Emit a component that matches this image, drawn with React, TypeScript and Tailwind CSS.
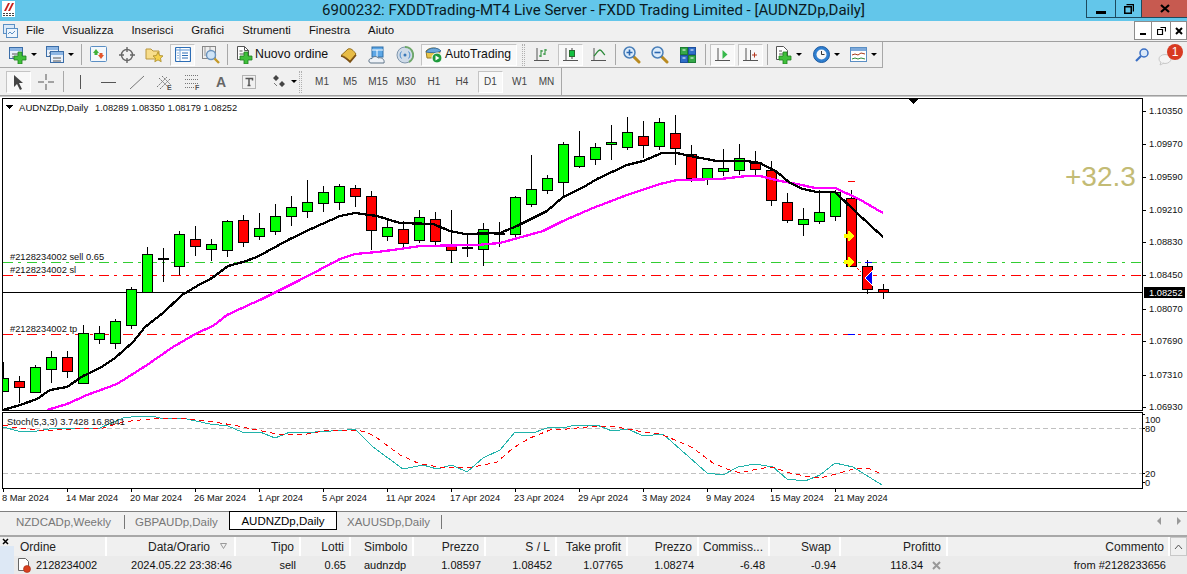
import React from "react";

const CANDLES: [number, number, number, number, string][] = [
  [378,391,362,392,"g"],[381,387,376,403,"r"],[367,392,365,393,"g"],[357,369,351,383,"g"],[357,371,351,378,"r"],
  [333,383,325,383,"g"],[333,339,326,344,"g"],[321,343,319,349,"g"],[289,325,287,329,"g"],[254,292,247,293,"g"],
  [258,258,248,282,"g"],[234,266,231,275,"g"],[239,246,226,256,"r"],[244,249,239,261,"g"],[221,250,220,257,"g"],
  [220,242,215,247,"r"],[228,236,213,240,"g"],[216,231,204,235,"g"],[207,216,196,226,"g"],[202,211,180,218,"g"],
  [192,203,186,212,"g"],[186,202,184,210,"g"],[188,196,185,207,"r"],[196,230,191,250,"r"],[227,236,218,241,"g"],
  [229,243,221,248,"r"],[217,240,210,243,"g"],[219,241,212,245,"r"],[245,250,210,263,"r"],[247,248,234,257,"r"],
  [229,249,223,266,"g"],[233,233,222,247,"g"],[197,234,196,238,"g"],[189,204,155,207,"g"],[178,190,175,194,"g"],
  [144,182,142,195,"g"],[156,166,131,168,"g"],[147,159,143,165,"g"],[142,144,125,160,"g"],[132,147,117,150,"g"],
  [136,145,121,158,"r"],[122,146,118,150,"g"],[133,148,115,165,"r"],[154,178,145,182,"r"],[168,179,168,185,"g"],
  [168,171,149,176,"g"],[158,170,144,175,"g"],[163,169,151,175,"r"],[170,200,161,206,"r"],[202,220,193,223,"r"],
  [219,224,208,236,"g"],[212,221,190,224,"g"],[192,216,190,221,"g"],[198,266,190,267,"r"],[266,289,260,294,"r"],[289,292,284,299,"r"],
];

const BLACK = "3,410 20,405 37,399 50,390 67,387 83,376 100,368 115,358 133,342 145,327 163,313 182,295 197,286 212,278 228,266 243,262 257,257 290,239 313,228 340,216 355,213 377,216 400,223 433,224 450,231 465,234 500,233 517,226 547,211 563,197 582,188 597,179 627,165 643,161 662,153 677,153 690,156 717,161 747,161 760,163 777,172 790,183 803,189 817,192 835,192 857,213 883,237";
const MAGENTA = "47,410 67,404 87,395 117,384 147,365 173,347 197,333 213,326 227,315 253,303 260,300 300,280 340,259 355,254 377,252 400,249 420,246 477,245 500,243 543,231 563,221 593,208 627,195 660,184 677,180 720,179 747,176 760,176 780,181 797,184 815,188 835,188 857,198 883,213";
const TEAL = "3,427 18,431 37,431 55,428 75,428 100,428 123,418 140,416 152,416 160,418 182,418 210,424 228,426 242,432 260,432 275,438 290,432 315,432 347,430 355,429 373,447 403,469 423,465 437,469 452,465 467,472 483,458 500,450 515,432 533,433 547,428 567,427 575,425 597,425 612,431 628,429 643,436 663,434 707,473 723,475 738,467 755,464 773,467 787,479 805,481 820,475 835,463 853,467 882,485";
const REDS = "3,425 17,428 37,430 57,430 73,429 103,428 123,422 140,420 160,418 182,418 207,421 233,425 257,430 277,434 307,434 323,431 355,430 367,432 380,440 400,455 420,464 440,467 467,468 483,465 497,462 513,448 530,438 550,430 567,429 597,426 617,427 643,432 660,434 680,442 693,448 713,463 727,469 740,473 757,469 772,467 790,473 810,477 820,478 840,473 857,468 868,468 882,474";

const PRICES: [string, number][] = [["1.10350",111],["1.09970",144],["1.09590",177],["1.09210",210],["1.08830",242],["1.08450",275],["1.08070",309],["1.07690",341],["1.07310",375],["1.06930",407]];
const DATES = ["8 Mar 2024","14 Mar 2024","20 Mar 2024","26 Mar 2024","1 Apr 2024","5 Apr 2024","11 Apr 2024","17 Apr 2024","23 Apr 2024","29 Apr 2024","3 May 2024","9 May 2024","15 May 2024","21 May 2024"];

function Chart() {
  const t = { fontSize: 9.3, fill: "#111" };
  return (
    <svg viewBox="0 97 1187 414" className="block w-[1187px] h-[414px] bg-white">
      <defs><clipPath id="plot"><rect x="3" y="99" width="1139" height="311" /></clipPath></defs>
      <g shapeRendering="crispEdges" fill="none">
        <path d="M3 262.5H1142" stroke="#32cd32" strokeDasharray="10 5 3 6" />
        <path d="M3 275.5H1142" stroke="#ff0000" strokeDasharray="10 5 3 6" />
        <path d="M3 334.5H1142" stroke="#ff0000" strokeDasharray="10 5 3 6" />
        <path d="M3 292.5H1142" stroke="#000" />
        <g clipPath="url(#plot)">
          {CANDLES.map((c, i) => {
            const x = 3 + 16 * i;
            return (
              <g key={i}>
                <path d={`M${x + 0.5} ${c[2]}V${c[3]}`} stroke="#000" />
                <rect x={x - 4.5} y={c[0] + 0.5} width={10} height={Math.max(c[1] - c[0], 1)} fill={c[4] === "g" ? "#00ff00" : "#ff0000"} stroke="#000" />
              </g>
            );
          })}
          <polyline points={MAGENTA} stroke="#ff00ff" strokeWidth={2.3} />
          <polyline points={BLACK} stroke="#000" strokeWidth={2.3} />
        </g>
        <path d="M848 181.5h7" stroke="#ff0000" />
        <path d="M865 262.5h7" stroke="#0000ff" />
        <path d="M848 334.5h7" stroke="#0000ff" />
        <path d="M857 268l4 4" stroke="#ff0000" strokeDasharray="1 1" />
        <path d="M844 234h4v-3h2l4 5-4 5h-2v-3h-4z" fill="#ffff00" />
        <path d="M844 260h4v-3h2l4 5-4 5h-2v-3h-4z" fill="#ffff00" />
        <path d="M865 278l7-7v14z" fill="#0000ff" stroke="#fff" />
        <path d="M2.500 98.500H1142.500V410.500H2.500Z" stroke="#000" />
        <path d="M2.500 412.500H1142.500V488.500H2.500Z" stroke="#000" />
        <path d="M3 428.500H1142M3 473.500H1142" stroke="#c0c0c0" strokeDasharray="5 3" />
        <polyline points={TEAL} stroke="#20b2aa" />
        <polyline points={REDS} stroke="#ff0000" strokeDasharray="5 4" />
        <path d="M908 99h10l-5 5z" fill="#000" />
        <path d="M5 105h8l-4 4z" fill="#000" />
        {PRICES.map(([, y]) => <path key={y} d={`M1143 ${y + 0.5}h3`} stroke="#000" />)}
        {DATES.map((_, i) => <path key={i} d={`M${3.5 + i * 64} 489v3`} stroke="#000" />)}
        <path d="M1143 414.500h2M1143 428.500h2M1143 473.500h2M1143 482.500h2" stroke="#000" />
        <rect x="1144" y="287" width="41" height="11" fill="#000" />
      </g>
      <g {...t}>
        <text x="19" y="110.500" fontSize={9.6}>AUDNZDp,Daily</text>
        <text x="95" y="110.500">1.08289 1.08350 1.08179 1.08252</text>
        <text x="10" y="260">#2128234002 sell 0.65</text>
        <text x="10" y="273">#2128234002 sl</text>
        <text x="10" y="332">#2128234002 tp</text>
        <text x="7" y="425">Stoch(5,3,3) 3.7428 16.8941</text>
        {PRICES.map(([p, y]) => <text key={p} x="1149" y={y + 2.5}>{p}</text>)}
        <text x="1149" y="296" fill="#fff">1.08252</text>
        <text x="1145" y="423">100</text>
        <text x="1145" y="432">80</text>
        <text x="1145" y="477">20</text>
        <text x="1145" y="486">0</text>
        {DATES.map((d, i) => <text key={d} x={2 + i * 64} y="501">{d}</text>)}
      </g>
      <text x="1065" y="186" fontSize={28} fill="#c3bb75">+32.3</text>
    </svg>
  );
}

const S = ({ children, w = 18, h = 18 }: { children: React.ReactNode; w?: number; h?: number }) => (
  <svg width={w} height={h} viewBox={`0 0 ${w} ${h}`} fill="none" className="block">{children}</svg>
);
const Plus = ({ x, y }: { x: number; y: number }) => (
  <path d={`M${x} ${y}h4v4h4v4h-4v4h-4v-4h-4v-4h4z`} fill="#3fc03a" stroke="#1f7d1f" strokeWidth={0.8} />
);
const Win = ({ x, y, w, h }: { x: number; y: number; w: number; h: number }) => (
  <g>
    <rect x={x + 0.5} y={y + 0.5} width={w} height={h} fill="#e9f1fb" stroke="#3c6ea8" />
    <rect x={x + 1} y={y + 1} width={w - 1} height={3} fill="#8db6e4" />
    <path d={`M${x + 3} ${y + 7}h${w - 5}M${x + 3} ${y + 10}h${w - 5}`} stroke="#555" />
  </g>
);
const Glass = ({ x = 0, y = 0, sign = "+" }: { x?: number; y?: number; sign?: string }) => (
  <g transform={`translate(${x} ${y})`}>
    <path d="M10 10l6 6" stroke="#b98a20" strokeWidth={3} strokeLinecap="round" />
    <circle cx="6.500" cy="6.500" r="5.500" fill="#dcecfb" stroke="#4a7fb8" strokeWidth={1.5} />
    {sign && <path d={sign === "+" ? "M3.500 6.500h6M6.500 3.500v6" : "M3.500 6.500h6"} stroke="#2b67b0" strokeWidth={1.6} />}
  </g>
);
const Axes = ({ children }: { children: React.ReactNode }) => (
  <S w={16} h={16}><path d="M3 1v13M0 13.500h15" stroke="#555" />{children}</S>
);

const Icons: Record<string, React.ReactNode> = {
  newChart: <S w={19}><Win x={0} y={1} w={13} h={11} /><Plus x={9} y={6} /></S>,
  profiles: <S><Win x={0} y={0} w={12} h={10} /><Win x={4} y={5} w={13} h={11} /></S>,
  market: <S w={17} h={17}><rect x=".5" y=".5" width="16" height="15" rx="1" fill="#f4f8fc" stroke="#5b8fc4" /><path d="M6 3l3 4H7.500v2h-3V7H3z" fill="#3fb13a" /><path d="M11 13l-3-4h1.500V7h3v2H14z" fill="#e2552b" /></S>,
  nav: <S><circle cx="9" cy="9" r="5.500" stroke="#666" strokeWidth={1.4} /><path d="M9 1v5M9 12v5M1 9h5M12 9h5" stroke="#666" strokeWidth={1.4} /></S>,
  folder: <S w={19}><path d="M1 3h5l2 2h6v8H1z" fill="#f7dd8b" stroke="#b9963c" /><path d="M13 6l1.600 3.500 3.400.4-2.500 2.300.7 3.500-3.200-1.800-3.200 1.800.7-3.500L8 9.900l3.400-.4z" fill="#f5d04a" stroke="#a88a24" strokeWidth={0.8} /></S>,
  term: <S w={16} h={15}><rect x=".5" y=".5" width="15" height="14" rx="1" fill="#fff" stroke="#2d6db5" strokeWidth={1.2} /><path d="M1 3h14" stroke="#a9c8ea" strokeWidth={2} /><path d="M5 1v13" stroke="#7aa6d6" /><path d="M7 6h6M7 8.500h6M7 11h6M2.500 6h1M2.500 8.500h1M2.500 11h1" stroke="#2d6db5" /></S>,
  tester: <S w={19}><rect x=".5" y=".5" width="13" height="12" fill="#eee" stroke="#888" /><path d="M3 1v9M8 1v9" stroke="#999" /><circle cx="9" cy="9" r="4.500" fill="#cfe4f7" stroke="#6a93bd" strokeWidth={1.4} /><path d="M12.500 12.500l4.500 4.500" stroke="#c49a2a" strokeWidth={2.4} /></S>,
  order: <S w={18}><path d="M1.500 .5h7l4 4v9h-11z" fill="#fff" stroke="#555" /><path d="M8.500 .5v4h4M3.500 5h3M3.500 8h6" stroke="#555" /><Plus x={8} y={6} /></S>,
  book: <S><path d="M1 9.500L8 3c3-1 5 1 8 5l-6 7c-3-3-6-5-9-5.500z" fill="#e8bc45" stroke="#96701c" /><path d="M1 10c3 .5 6 3 9 6l6-7" stroke="#7c4f12" strokeWidth={1.6} /></S>,
  cloud: <S><rect x="4" y="1" width="11" height="10" fill="#5da7e6" stroke="#2e6ea8" /><path d="M4 4h11M9 4v7" stroke="#fff" /><path d="M3 17c-3 0-3-5 1-4.500C5 10 9 10 10 12c3-1 7 1 6 5z" fill="#eef2f7" stroke="#5f7488" /></S>,
  signal: <S><circle cx="9" cy="9" r="8" fill="#cfdbe8" stroke="#7f95ac" /><path d="M9 1a8 8 0 0 1 4 15" stroke="#6fa86a" strokeWidth={2} /><path d="M5.500 5.500a5 5 0 0 0 0 7M12.500 5.500a5 5 0 0 1 0 7" stroke="#4b8ccd" /><circle cx="9" cy="9" r="1.500" fill="#3a78b8" /></S>,
  auto: <S w={17}><path d="M2 12L1 5c3-4 12-4 14 0l-1 7z" fill="#e8c64a" stroke="#9a7d25" /><path d="M1 6c3-5 12-5 15-1-4 2-10 2-15 1z" fill="#6aa7dc" stroke="#3a6f9f" /><circle cx="12" cy="12" r="5" fill="#1e9b3c" stroke="#fff" /><path d="M10.500 9.500l4 2.500-4 2.500z" fill="#fff" /></S>,
  bars: <Axes><path d="M7 10V3M5 9h2M7 4h2M11 8V2M9 7h2M11 3h2" stroke="#1e8a2c" /></Axes>,
  candles: <Axes><path d="M9 1v11" stroke="#444" /><rect x="6.500" y="3.500" width="5" height="6" fill="#12c040" stroke="#2a6a30" /></Axes>,
  line: <Axes><path d="M3 9c2-2 4-6 6-6s3 4 5 5" stroke="#2d8a3a" strokeWidth={1.3} /></Axes>,
  zoomIn: <S><Glass /></S>,
  zoomOut: <S><Glass sign="-" /></S>,
  tile: <S w={16} h={16}><rect x=".5" y=".5" width="7" height="7" fill="#35a84a" stroke="#1d7d33" /><rect x="8.500" y=".5" width="7" height="7" fill="#2f6ec8" stroke="#1d4f9c" /><rect x=".5" y="8.500" width="7" height="7" fill="#2f6ec8" stroke="#1d4f9c" /><rect x="8.500" y="8.500" width="7" height="7" fill="#35a84a" stroke="#1d7d33" /><path d="M2.500 3h3M10.500 3h3M2.500 11h3M10.500 11h3" stroke="#fff" /></S>,
  scroll: <Axes><path d="M7.500 3v9l5-4.500z" fill="#38b94c" /></Axes>,
  shift: <Axes><path d="M7.500 3v10" stroke="#555" /><path d="M9 8h5M11.500 5.500v5" stroke="#b3361e" /></Axes>,
  indic: <S w={18}><path d="M1.500 .5h7l4 4v9h-11z" fill="#fff" stroke="#555" /><path d="M4 5h3M4 8h5" stroke="#555" /><Plus x={8} y={6} /></S>,
  clock: <S w={17} h={17}><circle cx="8.500" cy="8.500" r="8" fill="#2f7fd0" stroke="#1e5aa0" /><circle cx="8.500" cy="8.500" r="5" fill="#f7f7f7" /><path d="M8.500 5v3.500h3" stroke="#333" /></S>,
  tpl: <S w={17} h={15}><rect x=".5" y=".5" width="16" height="14" fill="#fff" stroke="#5b8fc4" /><rect x="1" y="1" width="15" height="3" fill="#7eaadb" /><path d="M2 8l3-1 3 1 3-2 4 1" stroke="#a63a1a" /><path d="M2 12l3-1 3 1 3-1 4 1" stroke="#2f8a3a" /></S>,
  cursor: <S w={13} h={16}><path d="M2 1l9 8H7l3 6-2 1-3-6-3 3z" fill="#444" /></S>,
  cross: <S><path d="M9 1v6M9 11v6M1 9h6M11 9h6" stroke="#555" /></S>,
  vline: <S w={6}><path d="M3.500 2v14" stroke="#555" /></S>,
  hline: <S><path d="M1 9.500h15" stroke="#555" /></S>,
  tline: <S w={16}><path d="M1 16L15 3" stroke="#777" /></S>,
  chan: <S w={18}><path d="M1 14L11 4M4 16L14 6M3 5l9 9M6 3l9 9" stroke="#777" strokeDasharray="2 1" /><text x="11" y="17" fontSize="7" fontWeight="700" fill="#555">E</text></S>,
  fibo: <S w={16}><path d="M0 2.500h13M0 6.500h13M0 10.500h13M0 14.500h9" stroke="#777" strokeDasharray="1 1" /><text x="10" y="17" fontSize="7" fontWeight="700" fill="#555">F</text></S>,
  textA: <span className="text-[14px] font-bold text-[#666] leading-none">A</span>,
  textT: <S w={14} h={14}><rect x=".5" y=".5" width="13" height="13" stroke="#777" strokeDasharray="1 1" /><path d="M3.500 3.500h7v2M7 3.500v7M5.500 10.500h3" stroke="#555" strokeWidth={1.5} /></S>,
  shapes: <S w={15} h={15}><path d="M5 1l3 3-3 3-3-3zM11 7l3 3-3 3-3-3z" fill="#444" /><path d="M3 9l3 3" stroke="#777" /></S>,
};

const Ic = ({ n, c = "w-6" }: { n: string; c?: string }) => (
  <div className={`${c} h-6 shrink-0 flex items-center justify-center`}>{Icons[n]}</div>
);
const Caret = ({ c = "w-[7px]" }: { c?: string }) => (
  <div className={`${c} shrink-0 flex justify-center`}><div className="w-0 h-0 border-x-[3px] border-x-transparent border-t-[3px] border-t-black" /></div>
);
const Sep = ({ c = "" }: { c?: string }) => <div className={`${c} w-px h-[21px] shrink-0 bg-[#a8a8a8]`} />;
const Pressed = ({ n, c = "" }: { n: string; c?: string }) => (
  <div className={`${c} w-[25px] h-[22px] shrink-0 flex items-center justify-center bg-[#f8f8f8] border border-[#c4c4c4] border-r-white border-b-white`}>{Icons[n]}</div>
);
const Grip = ({ c = "" }: { c?: string }) => <div className={`${c} w-[3px] h-[22px] shrink-0 border-x border-dotted border-[#b0b0b0]`} />;

const MENUS = ["File", "Visualizza", "Inserisci", "Grafici", "Strumenti", "Finestra", "Aiuto"];
const PERIODS = ["M1", "M5", "M15", "M30", "H1", "H4"];

const COLS = "grid grid-cols-[93px_129px_65px_50px_63px_72px_71px_71px_71px_71px_71px_107px_222px_17px]";
const HEAD: [string, string][] = [["Ordine","pl-[6px] text-left"],["Data/Orario","pr-[24px] text-right"],["Tipo","pr-[5px] text-right"],["Lotti","pr-[5px] text-right"],["Simbolo","pl-[13px] text-left"],["Prezzo","pr-[5px] text-right"],["S / L","pr-[5px] text-right"],["Take profit","pr-[5px] text-right"],["Prezzo","pr-[5px] text-right"],["Commiss...","pr-[5px] text-right"],["Swap","pr-[8px] text-right"],["Profitto","pr-[5px] text-right"],["Commento","pr-[4px] text-right"]];
const ROW: [string, string][] = [["2024.05.22 23:38:46","pr-[4px] text-right"],["sell","pr-[5px] text-right"],["0.65","pr-[5px] text-right"],["audnzdp","pl-[13px] text-left"],["1.08597","pr-[5px] text-right"],["1.08452","pr-[5px] text-right"],["1.07765","pr-[5px] text-right"],["1.08274","pr-[5px] text-right"],["-6.48","pr-[5px] text-right"],["-0.94","pr-[5px] text-right"]];

export default function App() {
  return (
    <div className="w-[1187px] h-[574px] overflow-hidden bg-[#f0f0f0] text-[#111] flex flex-col [font-family:'Liberation_Sans',sans-serif]">
      <div className="h-[21px] shrink-0 grid grid-cols-[1fr_auto_1fr] bg-[#63c6ea]">
        <div className="pl-[2px] pt-[1px]">
          <svg width="13" height="16" viewBox="0 0 13 16" className="block">
            <rect width="13" height="16" fill="#fff" />
            <path d="M2 10L6 2h2L4 10zM6 10l4-8h2l-4 8z" fill="#c8201c" />
            <path d="M1 12.500h11M1 14.500h11" stroke="#444" strokeDasharray="2 1" />
          </svg>
        </div>
        <div className="text-[15px] leading-[20px] [font-family:'Roboto',sans-serif] text-[#0c1a22] whitespace-nowrap">6900232: FXDDTrading-MT4 Live Server - FXDD Trading Limited - [AUDNZDp,Daily]</div>
        <div className="flex justify-end">
          <div className="w-[29px] h-[18px] border-l border-b border-[#1d4a5e] flex items-end justify-center pb-[3px]"><div className="w-[10px] h-[3px] bg-black" /></div>
          <div className="w-[26px] h-[18px] border-l border-b border-[#1d4a5e] flex items-center justify-center">
            <svg width="10" height="10" className="block"><path d="M2.500 .5h7v7M.75 2.750h6.500v6.500H.75z" fill="none" stroke="#000" strokeWidth="1.500" /></svg>
          </div>
          <div className="w-[46px] h-[18px] bg-[#c75a50] border-l border-b border-[#1d4a5e] flex items-center justify-center">
            <svg width="10" height="9" className="block"><path d="M1 1l8 7M9 1L1 8" stroke="#000" strokeWidth="2.200" /></svg>
          </div>
        </div>
      </div>

      <div className="h-[20px] shrink-0 flex items-center justify-between">
        <div className="flex items-center">
          <div className="w-[26px] pl-[3px]">
            <svg width="15" height="14" className="block"><rect x=".5" y=".5" width="11" height="9" fill="#dbe9f8" stroke="#5b8fc4" /><rect x="3.500" y="4.500" width="11" height="9" fill="#eef5fc" stroke="#5b8fc4" /><path d="M5 10l2-2 2 2 3-3" stroke="#5b8fc4" fill="none" /></svg>
          </div>
          <div className="flex gap-[18px] text-[11.400px] leading-none">
            {MENUS.map((m) => <span key={m}>{m}</span>)}
          </div>
        </div>
        <div className="flex self-start h-[19px]">
          <div className="w-[18px] border border-[#8c8c8c] bg-white flex items-end justify-center pb-[4px]"><div className="w-[6px] h-[2px] bg-black" /></div>
          <div className="w-[19px] border-y border-r border-[#8c8c8c] bg-white flex items-center justify-center">
            <svg width="9" height="9" className="block"><path d="M3.500 1.500h5v4M.5 3.500h5v5h-5z" fill="none" stroke="#000" strokeWidth="1.200" /></svg>
          </div>
          <div className="w-[16px] border-y border-r border-[#8c8c8c] bg-white flex items-center justify-center">
            <svg width="8" height="8" className="block"><path d="M1 1l6 6M7 1L1 7" stroke="#000" strokeWidth="2" /></svg>
          </div>
        </div>
      </div>

      <div className="h-[27px] shrink-0 border-t border-[#a0a0a0] flex items-center">
        <div className="w-[883px] h-full flex items-center border-r border-b border-[#a8a8a8]">
          <Ic n="newChart" c="w-6 ml-[6px]" /><Caret />
          <Ic n="profiles" c="w-6 ml-[6px]" /><Caret />
          <Sep c="ml-[7px]" />
          <Ic n="market" c="w-6 ml-[4px]" />
          <Ic n="nav" c="w-6 ml-[5px]" />
          <Ic n="folder" c="w-6 ml-[3px]" />
          <Pressed n="term" c="ml-[4px]" />
          <Ic n="tester" c="w-6 ml-[4px]" />
          <Sep c="ml-[4px]" />
          <div className="ml-[3px] w-[102px] flex items-center pl-[5px] shrink-0">
            {Icons.order}
            <span className="ml-[1px] text-[12.300px] leading-none whitespace-nowrap">Nuovo ordine</span>
          </div>
          <Ic n="book" c="w-6 ml-[4px]" />
          <Ic n="cloud" c="w-6 ml-[4px]" />
          <Ic n="signal" c="w-6 ml-[4px]" />
          <div className="ml-[4px] w-[96px] h-[22px] shrink-0 flex items-center pl-[3px] bg-[#f8f8f8] border border-[#c4c4c4] border-r-white border-b-white">
            {Icons.auto}
            <span className="ml-[3px] text-[12.200px] leading-none">AutoTrading</span>
          </div>
          <Grip c="ml-[5px]" />
          <Ic n="bars" c="w-6 ml-[5px]" />
          <Pressed n="candles" c="ml-[4px]" />
          <Ic n="line" c="w-6 ml-[4px]" />
          <Sep c="ml-[4px]" />
          <Ic n="zoomIn" c="w-6 ml-[4px]" />
          <Ic n="zoomOut" c="w-6 ml-[4px]" />
          <Ic n="tile" c="w-6 ml-[4px]" />
          <Sep c="ml-[5px]" />
          <Pressed n="scroll" c="ml-[4px]" />
          <Pressed n="shift" c="ml-[3px]" />
          <Sep c="ml-[4px]" />
          <Ic n="indic" c="w-[22px] ml-[5px]" /><Caret c="w-[8px]" />
          <Ic n="clock" c="w-6 ml-[6px]" /><Caret c="w-[8px]" />
          <Ic n="tpl" c="w-6 ml-[5px]" /><Caret />
        </div>
        <div className="flex-1 flex items-center justify-end pr-[4px]">
          <svg width="16" height="16" className="block mr-[8px]"><circle cx="10" cy="6" r="4" fill="#dbe9f8" stroke="#3a6fc4" strokeWidth="1.500" /><path d="M7 9l-5 5" stroke="#3a6fc4" strokeWidth="2.200" /></svg>
          <div className="relative w-[25px] h-[22px]">
            <svg width="14" height="12" className="block absolute left-0 bottom-0"><ellipse cx="7" cy="5" rx="6" ry="4.500" fill="#f4f4f4" stroke="#c8c8c8" /><path d="M3 8l-1 3 4-2" fill="#f4f4f4" stroke="#c8c8c8" /></svg>
            <div className="absolute right-0 top-0 w-[16px] h-[16px] rounded-full bg-[#d83a22] text-white text-[12px] leading-[16px] text-center">1</div>
          </div>
        </div>
      </div>

      <div className="h-[27px] shrink-0 flex items-center">
        <div className="w-[562px] h-full flex items-center border-r border-[#a8a8a8]">
          <Pressed n="cursor" c="ml-[6px]" />
          <Ic n="cross" c="w-6 ml-[3px]" />
          <Sep c="ml-[5px]" />
          <Ic n="vline" c="w-6 ml-[4px]" />
          <Ic n="hline" c="w-6 ml-[5px]" />
          <Ic n="tline" c="w-6 ml-[4px]" />
          <Ic n="chan" c="w-6 ml-[4px]" />
          <Ic n="fibo" c="w-6 ml-[4px]" />
          <Ic n="textA" c="w-6 ml-[4px]" />
          <Ic n="textT" c="w-6 ml-[4px]" />
          <Ic n="shapes" c="w-6 ml-[5px]" /><Caret c="w-[8px]" />
          <Grip c="ml-[1px]" />
          <div className="flex items-center ml-[6px] text-[10px] text-[#444]">
            {PERIODS.map((p) => <div key={p} className="w-[28px] text-center">{p}</div>)}
          </div>
          <div className="ml-[2px] w-[25px] h-[22px] flex items-center justify-center text-[10px] text-[#444] bg-[#f8f8f8] border border-[#c4c4c4] border-r-white border-b-white">D1</div>
          <div className="ml-[3px] w-[27px] text-center text-[10px] text-[#444]">W1</div>
          <div className="w-[27px] text-center text-[10px] text-[#444]">MN</div>
        </div>
      </div>
      <div className="h-[1px] shrink-0 bg-[#a0a0a0]" />
      <div className="h-[1px] shrink-0 bg-[#c8c8c8]" />

      <Chart />

      <div className="h-[24px] shrink-0 flex border-t border-[#808080] text-[11.500px] leading-[14px] text-[#777]">
        <div className="w-[125px] h-[14px] mt-[3px] pl-[16px] border-r border-[#777]">NZDCADp,Weekly</div>
        <div className="w-[104px] h-[14px] mt-[3px] pl-[10px]">GBPAUDp,Daily</div>
        <div className="-mt-px w-[108px] h-[19px] border border-black bg-white text-black text-center leading-[18px]">AUDNZDp,Daily</div>
        <div className="w-[105px] h-[14px] mt-[3px] pl-[10px] border-r border-[#777]">XAUUSDp,Daily</div>
        <div className="ml-auto flex gap-[16px] mt-[5px] pr-[6px]">
          <div className="w-0 h-0 border-y-[4px] border-y-transparent border-r-[4px] border-r-[#999]" />
          <div className="w-0 h-0 border-y-[4px] border-y-transparent border-l-[4px] border-l-[#999]" />
        </div>
      </div>

      <div className="flex-1 border-t-2 border-[#a8a8a8] flex text-[11px] leading-none">
        <div className="w-[14px] shrink-0 flex flex-col">
          <div className="h-[9px] pl-[2px] pt-[1px]">
            <svg width="7" height="7" className="block"><path d="M1 1l5 5M6 1L1 6" stroke="#000" strokeWidth="1.500" /></svg>
          </div>
          <div className="flex-1 bg-[#dde8f5]" />
        </div>
        <div className="flex-1 flex flex-col">
          <div className={`${COLS} h-[19px] items-stretch text-[12px]`}>
            {HEAD.map(([h, c], i) => (
              <div key={i} className={`${c} relative flex items-center ${c.includes("text-right") ? "justify-end" : ""} border-r-2 border-white bg-[#f0f0f0] whitespace-nowrap text-[#222]`}>
                {h}
                {i === 1 && <svg width="7" height="6" className="absolute right-[7px] top-[6px]"><path d="M.5 .5h6l-3 5z" fill="none" stroke="#999" /></svg>}
              </div>
            ))}
            <div className="flex items-center justify-center border border-[#c8c8c8]">
              <svg width="9" height="6" className="block"><path d="M1 5l3.500-4L8 5" stroke="#555" fill="none" /></svg>
            </div>
          </div>
          <div className={`${COLS} flex-1 bg-[#ebebeb] items-center whitespace-nowrap`}>
            <div className="flex items-center pl-[3px] gap-[5px]">
              <svg width="14" height="16" className="block shrink-0"><path d="M1.500 1.500h7l3 3v9h-10z" fill="#fff" stroke="#666" /><circle cx="10" cy="12" r="3.500" fill="#d8401f" stroke="#a52a12" strokeWidth=".6" /></svg>
              2128234002
            </div>
            {ROW.map(([v, c], i) => <div key={i} className={c}>{v}</div>)}
            <div className="flex items-center justify-end pr-[7px] gap-[9px]">
              118.34
              <svg width="9" height="9" className="block"><path d="M1 1l7 7M8 1L1 8" stroke="#999" strokeWidth="2" /></svg>
            </div>
            <div className="text-right pr-[4px]">from #2128233656</div>
            <div />
          </div>
        </div>
      </div>
    </div>
  );
}
